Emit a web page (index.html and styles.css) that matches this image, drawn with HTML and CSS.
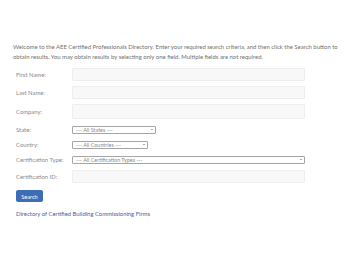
FILE: index.html
```html
<!DOCTYPE html>
<html lang="en">
<head>
    <meta charset="UTF-8">
    <meta name="viewport" content="width=device-width, initial-scale=1.0">
    <title>Certified Professionals Directory</title>
    <link rel="stylesheet" href="styles.css">
</head>
<body>
    <div class="page">
        <p class="intro">Welcome to the AEE Certified Professionals Directory. Enter your required search criteria, and then click the Search button to obtain results. You may obtain results by selecting only one field. Multiple fields are not required.</p>

        <form class="search-form">
            <div class="row">
                <label for="first-name">First Name:</label>
                <input type="text" id="first-name" name="first-name">
            </div>
            <div class="row">
                <label for="last-name">Last Name:</label>
                <input type="text" id="last-name" name="last-name">
            </div>
            <div class="row tall">
                <label for="company">Company:</label>
                <input type="text" id="company" name="company">
            </div>
            <div class="row sel">
                <label for="state">State:</label>
                <span class="select-wrap state">
                    <select id="state" name="state"><option>--- All States ---</option></select>
                </span>
            </div>
            <div class="row sel">
                <label for="country">Country:</label>
                <span class="select-wrap country">
                    <select id="country" name="country"><option>--- All Countries ---</option></select>
                </span>
            </div>
            <div class="row sel">
                <label for="cert-type">Certification Type:</label>
                <span class="select-wrap wide">
                    <select id="cert-type" name="cert-type"><option>--- All Certification Types ---</option></select>
                </span>
            </div>
            <div class="row">
                <label for="cert-id">Certification ID:</label>
                <input type="text" id="cert-id" name="cert-id">
            </div>
            <button type="button" class="search-button">Search</button>
        </form>

        <a class="firms-link" href="#">Directory of Certified Building Commissioning Firms</a>
    </div>
</body>
</html>
```

FILE: styles.css
```css
body {
    margin: 0;
    background-color: #fff;
    font-family: 'Lato', 'Open Sans', sans-serif;
    color: #666;
}
.page {
    padding: 42px 6px 0 13px;
}
.intro {
    margin: 0;
    font-size: 5.95px;
    line-height: 10px;
    color: #6f6f6f;
}
.search-form {
    margin-top: 3px;
    padding-left: 3px;
}
.row {
    display: flex;
    align-items: center;
    height: 18px;
}
.row.tall {
    height: 21px;
}
.row.sel {
    height: 15px;
}
.row label {
    width: 56px;
    flex-shrink: 0;
    font-size: 5.9px;
    color: #8a8a8a;
}
.row input {
    box-sizing: border-box;
    width: 233px;
    height: 13px;
    margin: 0;
    border: 1px solid #eee;
    background-color: #f8f8f8;
    border-radius: 1px;
}
.row.tall input {
    height: 15px;
}
.select-wrap {
    position: relative;
    display: block;
    height: 8px;
}
.select-wrap.state {
    width: 84px;
}
.select-wrap.country {
    width: 76px;
}
.select-wrap.wide {
    width: 233px;
}
.select-wrap select {
    display: block;
    box-sizing: border-box;
    appearance: none;
    -webkit-appearance: none;
    width: 100%;
    height: 8px;
    margin: 0;
    padding: 0 0 0 3px;
    border: 1px solid #a5a5a5;
    border-radius: 1px;
    background-color: #fff;
    font-family: inherit;
    font-size: 5.4px;
    line-height: 6px;
    color: #8a8a8a;
}
.select-wrap::after {
    content: "";
    position: absolute;
    right: 3px;
    top: 3px;
    border-left: 1.5px solid transparent;
    border-right: 1.5px solid transparent;
    border-top: 1.5px solid #555;
}
.search-button {
    display: block;
    margin-top: 5px;
    width: 27px;
    height: 12px;
    padding: 0;
    border: none;
    border-radius: 2px;
    background-color: #3d6db4;
    color: #fff;
    font-family: inherit;
    font-size: 5.6px;
}
.firms-link {
    display: block;
    margin-top: 7px;
    padding-left: 3px;
    font-size: 5.9px;
    line-height: 10px;
    color: #4d5ba6;
    text-decoration: none;
}
```
